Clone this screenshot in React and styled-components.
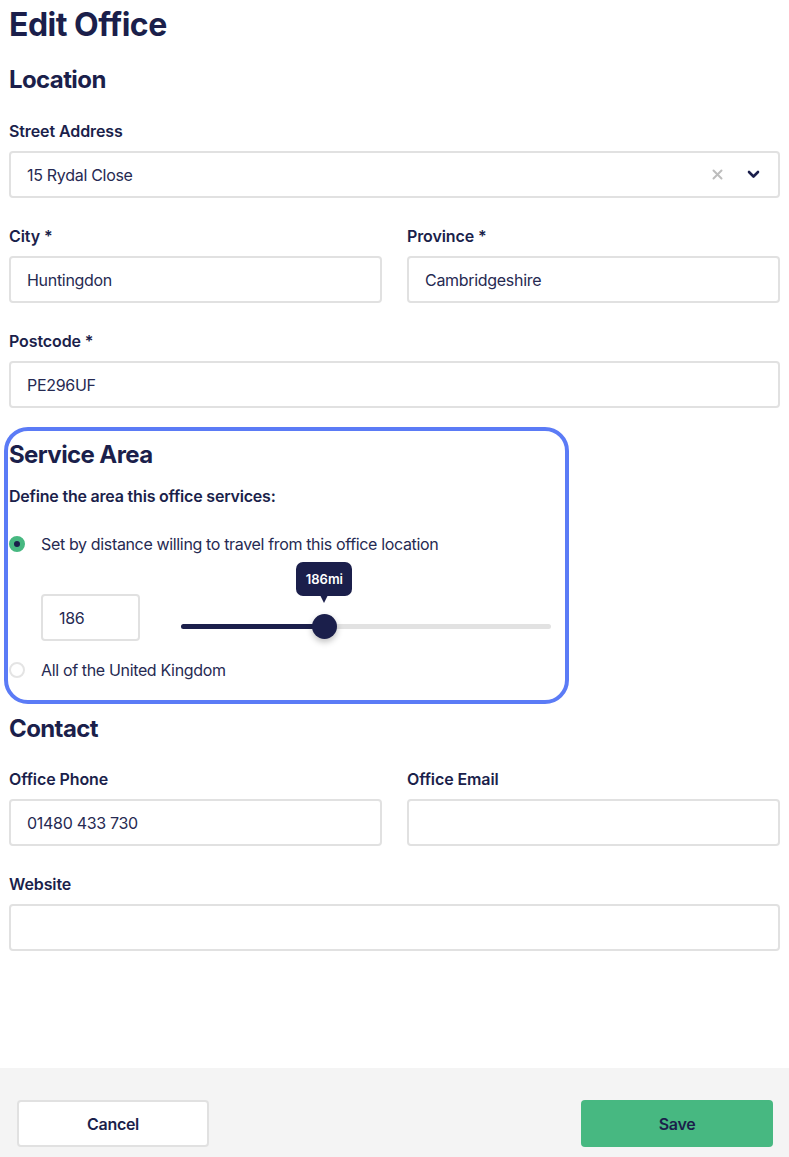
import React, { useState } from 'react';
import styled, { createGlobalStyle } from 'styled-components';

const GlobalStyle = createGlobalStyle`
  html, body {
    margin: 0;
    padding: 0;
    background: #ffffff;
  }
  body {
    font-family: Inter, "Liberation Sans", sans-serif;
    color: #1b1f4b;
    -webkit-font-smoothing: antialiased;
  }
  * {
    box-sizing: border-box;
  }
`;

const navy = '#1b1f4b';

const Page = styled.div`
  min-height: 100vh;
  display: flex;
  flex-direction: column;
`;

const Content = styled.main`
  flex: 1;
  padding: 5px 9px 0 9px;
`;

const Title = styled.h1`
  margin: 0;
  font-size: 32px;
  line-height: 40px;
  font-weight: 700;
  letter-spacing: -0.5px;
  color: ${navy};
`;

const SectionTitle = styled.h2`
  margin: ${(p) => p.$top || 0}px 0 0 0;
  font-size: 24px;
  line-height: 30px;
  font-weight: 700;
  letter-spacing: -0.6px;
  color: ${navy};
`;

const Row = styled.div`
  display: grid;
  grid-template-columns: ${(p) => (p.$cols === 2 ? '1fr 1fr' : '1fr')};
  column-gap: 25px;
  margin-top: ${(p) => p.$top || 28}px;
`;

const Field = styled.div`
  display: flex;
  flex-direction: column;
  gap: 10px;
`;

const Label = styled.label`
  font-size: 16px;
  line-height: 20px;
  font-weight: 600;
  letter-spacing: -0.1px;
  color: ${navy};
`;

const Input = styled.input`
  width: ${(p) => (p.$width ? `${p.$width}px` : '100%')};
  height: 47px;
  border: 2px solid #e1e1e1;
  border-radius: 4px;
  padding: 0 16px;
  font-family: inherit;
  font-size: 16px;
  letter-spacing: -0.3px;
  color: #262a52;
  background: #fff;
  outline: none;
`;

const SelectBox = styled.div`
  height: 47px;
  border: 2px solid #e1e1e1;
  border-radius: 4px;
  padding: 0 16px;
  display: flex;
  align-items: center;
  font-size: 16px;
  letter-spacing: -0.3px;
  color: #262a52;
`;

const SelectValue = styled.span`
  flex: 1;
`;

const SelectIcons = styled.div`
  display: flex;
  align-items: center;
  gap: 24px;
  margin-right: 2px;
`;

const ServiceBox = styled.section`
  width: 565px;
  margin: 19px 0 0 -5px;
  border: 4px solid #5b7bf6;
  border-radius: 24px;
  padding: 9px 14px 20px 1px;
`;

const SubLabel = styled.div`
  margin-top: 16px;
  font-size: 16px;
  line-height: 20px;
  font-weight: 600;
  letter-spacing: -0.2px;
  color: ${navy};
`;

const RadioRow = styled.label`
  display: flex;
  align-items: center;
  gap: 16px;
  margin-top: ${(p) => p.$top}px;
  font-size: 16px;
  line-height: 20px;
  letter-spacing: -0.35px;
  color: #262a52;
`;

const RadioDot = styled.span`
  width: 16px;
  height: 16px;
  border-radius: 50%;
  flex-shrink: 0;
  background: ${(p) => (p.$checked ? navy : '#fff')};
  border: ${(p) => (p.$checked ? '5px solid #47b881' : '2px solid #e4e4e4')};
`;

const DistanceRow = styled.div`
  display: flex;
  align-items: flex-start;
  gap: 41px;
  margin: 40px 0 0 32px;
`;

const SliderWrap = styled.div`
  position: relative;
  flex: 1;
  height: 46px;
`;

const Track = styled.div`
  position: absolute;
  left: 0;
  right: 0;
  top: 30px;
  height: 5px;
  border-radius: 3px;
  background: #e2e2e2;
`;

const Fill = styled.div`
  position: absolute;
  left: 0;
  top: 30px;
  height: 5px;
  border-radius: 3px;
  background: ${navy};
`;

const Thumb = styled.div`
  position: absolute;
  top: 20px;
  width: 25px;
  height: 25px;
  margin-left: -12.5px;
  border-radius: 50%;
  background: ${navy};
  box-shadow: 0 3px 6px rgba(0, 0, 0, 0.25);
`;

const Tooltip = styled.div`
  position: absolute;
  top: -32px;
  transform: translateX(-50%);
  min-width: 56px;
  height: 34px;
  padding: 0 8px;
  border-radius: 7px;
  background: ${navy};
  color: #fff;
  font-size: 13px;
  font-weight: 600;
  display: flex;
  align-items: center;
  justify-content: center;

  &::after {
    content: '';
    position: absolute;
    left: 50%;
    bottom: -7px;
    margin-left: -4px;
    border-left: 4px solid transparent;
    border-right: 4px solid transparent;
    border-top: 8px solid ${navy};
  }
`;

const Footer = styled.footer`
  background: #f4f4f4;
  padding: 32px 16px 10px 17px;
  display: flex;
  justify-content: space-between;
  margin-top: 115px;
`;

const Button = styled.button`
  width: 192px;
  height: 47px;
  border-radius: 4px;
  font-family: inherit;
  font-size: 16px;
  font-weight: 600;
  letter-spacing: -0.3px;
  color: ${navy};
  cursor: pointer;
  background: ${(p) => (p.$primary ? '#47b881' : '#fff')};
  border: ${(p) => (p.$primary ? '0' : '2px solid #e1e1e1')};
`;

const ClearIcon = () => (
  <svg width="11" height="11" viewBox="0 0 11 11">
    <path d="M1.5 1.5 L9.5 9.5 M9.5 1.5 L1.5 9.5" stroke="#bdbdbd" strokeWidth="2" strokeLinecap="round" />
  </svg>
);

const ChevronIcon = () => (
  <svg width="13" height="9" viewBox="0 0 13 9">
    <path d="M2 2 L6.5 6.5 L11 2" stroke={navy} strokeWidth="2.6" fill="none" strokeLinecap="round" strokeLinejoin="round" />
  </svg>
);

const TextField = ({ label, value }) => (
  <Field>
    <Label>{label}</Label>
    <Input defaultValue={value} />
  </Field>
);

const App = () => {
  const [distance] = useState(186);
  const max = 480;
  const pct = (distance / max) * 100;

  return (
    <Page>
      <GlobalStyle />
      <Content>
        <Title>Edit Office</Title>

        <SectionTitle $top={20}>Location</SectionTitle>
        <Row $top={26}>
          <Field>
            <Label>Street Address</Label>
            <SelectBox>
              <SelectValue>15 Rydal Close</SelectValue>
              <SelectIcons>
                <ClearIcon />
                <ChevronIcon />
              </SelectIcons>
            </SelectBox>
          </Field>
        </Row>
        <Row $cols={2}>
          <TextField label="City *" value="Huntingdon" />
          <TextField label="Province *" value="Cambridgeshire" />
        </Row>
        <Row>
          <TextField label="Postcode *" value="PE296UF" />
        </Row>

        <ServiceBox>
          <SectionTitle>Service Area</SectionTitle>
          <SubLabel>Define the area this office services:</SubLabel>
          <RadioRow $top={28}>
            <RadioDot $checked />
            Set by distance willing to travel from this office location
          </RadioRow>
          <DistanceRow>
            <Input $width={99} defaultValue={distance} />
            <SliderWrap>
              <Track />
              <Fill style={{ width: `${pct}%` }} />
              <Tooltip style={{ left: `${pct}%` }}>{distance}mi</Tooltip>
              <Thumb style={{ left: `${pct}%` }} />
            </SliderWrap>
          </DistanceRow>
          <RadioRow $top={19}>
            <RadioDot />
            All of the United Kingdom
          </RadioRow>
        </ServiceBox>

        <SectionTitle $top={10}>Contact</SectionTitle>
        <Row $cols={2} $top={25}>
          <TextField label="Office Phone" value="01480 433 730" />
          <TextField label="Office Email" value="" />
        </Row>
        <Row $top={28}>
          <TextField label="Website" value="" />
        </Row>
      </Content>

      <Footer>
        <Button>Cancel</Button>
        <Button $primary>Save</Button>
      </Footer>
    </Page>
  );
};

export default App;
